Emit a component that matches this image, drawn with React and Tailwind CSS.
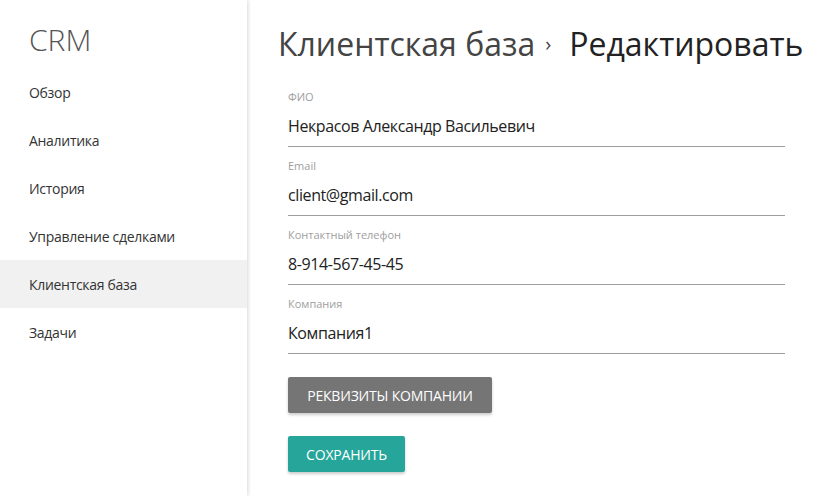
const menu = ["Обзор", "Аналитика", "История", "Управление сделками", "Клиентская база", "Задачи"];

const fields = [
  { label: "ФИО", value: "Некрасов Александр Васильевич" },
  { label: "Email", value: "client@gmail.com" },
  { label: "Контактный телефон", value: "8-914-567-45-45" },
  { label: "Компания", value: "Компания1" },
];

export default function App() {
  return (
    <div className="flex h-[496px] w-[838px] overflow-hidden bg-white font-['Open_Sans','Noto_Sans',sans-serif] text-[#222]">
      <aside className="relative z-10 w-[247px] shrink-0 bg-white shadow-[1px_0_4px_rgba(0,0,0,0.16)]">
        <div className="h-[68px] pt-[20px] pl-[29px] text-[30px] font-light leading-[40px] text-[#555]">CRM</div>
        <nav>
          {menu.map((item) => (
            <div
              key={item}
              className={
                "flex h-[48px] items-center pl-[29px] text-[14px] tracking-[-0.3px] text-[#333] " +
                (item === "Клиентская база" ? "bg-[#f1f1f1]" : "")
              }
            >
              {item}
            </div>
          ))}
        </nav>
      </aside>

      <main className="flex-1 pl-[31px]">
        <h1 className="mt-[24px] flex items-center whitespace-nowrap text-[32px] font-normal leading-[40px]">
          <span className="text-[#444]">Клиентская база</span>
          <span className="ml-[10px] mr-[18px] text-[20px] text-[#444]">›</span>
          <span className="text-[#222]">Редактировать</span>
        </h1>

        <div className="ml-[10px] mr-[53px] mt-[25px] flex flex-col gap-[11px]">
          {fields.map((f) => (
            <div key={f.label}>
              <div className="text-[11px] leading-[16px] text-[#9e9e9e]">{f.label}</div>
              <div className="flex h-[42px] items-center border-b border-[#9e9e9e] text-[16px] tracking-[-0.4px] text-[#222]">
                {f.value}
              </div>
            </div>
          ))}
        </div>

        <div className="ml-[10px] mt-[23px] flex flex-col items-start gap-[23px]">
          <button className="h-[36px] w-[204px] rounded-[2px] bg-[#757575] text-[14px] uppercase tracking-[-0.2px] text-white shadow-[0_2px_3px_rgba(0,0,0,0.2)]">
            Реквизиты компании
          </button>
          <button className="h-[36px] w-[117px] rounded-[2px] bg-[#26a69a] text-[14px] uppercase tracking-[-0.2px] text-white shadow-[0_2px_3px_rgba(0,0,0,0.2)]">
            Сохранить
          </button>
        </div>
      </main>
    </div>
  );
}
